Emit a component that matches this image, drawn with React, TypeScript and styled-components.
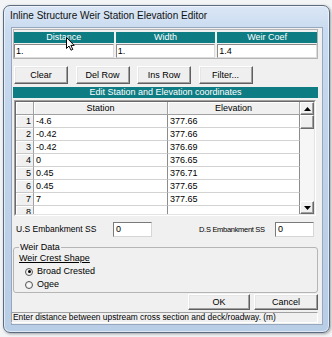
import React from 'react';
import styled, { createGlobalStyle } from 'styled-components';

const rows = [
    { station: '-4.6', elevation: '377.66' },
    { station: '-0.42', elevation: '377.66' },
    { station: '-0.42', elevation: '376.69' },
    { station: '0', elevation: '376.65' },
    { station: '0.45', elevation: '376.71' },
    { station: '0.45', elevation: '377.65' },
    { station: '7', elevation: '377.65' },
    { station: '', elevation: '' },
];

const App = () => {
    return (
        <Page>
            <GlobalStyle />
            <Window>
                <TitleBar>Inline Structure Weir Station Elevation Editor</TitleBar>
                <Client>
                    <TopTable>
                        <HeadCell>
                            Distance
                            <Cursor width="9" height="14" viewBox="0 0 9 14">
                                <path
                                    d="M0.5 0.5 L0.5 11.5 L3 9 L5 13.2 L6.8 12.4 L4.9 8.4 L8.2 8.4 Z"
                                    fill="#fff"
                                    stroke="#000"
                                    strokeWidth="1"
                                    strokeLinejoin="round"
                                />
                            </Cursor>
                        </HeadCell>
                        <HeadCell>Width</HeadCell>
                        <HeadCell>Weir Coef</HeadCell>
                        <ValueCell>1.</ValueCell>
                        <ValueCell>1.</ValueCell>
                        <ValueCell>1.4</ValueCell>
                    </TopTable>

                    <ButtonRow>
                        <Button>Clear</Button>
                        <Button>Del Row</Button>
                        <Button>Ins Row</Button>
                        <Button>Filter...</Button>
                    </ButtonRow>

                    <SectionBar>Edit Station and Elevation coordinates</SectionBar>

                    <GridBox>
                        <GridInner>
                            <GridTable>
                                <ColHead />
                                <ColHead>Station</ColHead>
                                <ColHead>Elevation</ColHead>
                                {rows.map((r, i) => (
                                    <React.Fragment key={i}>
                                        <RowNum>{i + 1}</RowNum>
                                        <DataCell>{r.station}</DataCell>
                                        <DataCell>{r.elevation}</DataCell>
                                    </React.Fragment>
                                ))}
                            </GridTable>
                            <ScrollBar>
                                <ScrollButton>
                                    <svg width="7" height="4" viewBox="0 0 7 4">
                                        <path d="M0 4 L3.5 0 L7 4 Z" fill="#000" />
                                    </svg>
                                </ScrollButton>
                                <Thumb />
                                <Track />
                                <ScrollButton>
                                    <svg width="7" height="4" viewBox="0 0 7 4">
                                        <path d="M0 0 L3.5 4 L7 0 Z" fill="#000" />
                                    </svg>
                                </ScrollButton>
                            </ScrollBar>
                        </GridInner>
                    </GridBox>

                    <EmbRow>
                        <FieldLabel $width={97}>U.S Embankment SS</FieldLabel>
                        <Input>0</Input>
                        <FieldLabel $width={76} $gap={47} $small>
                            D.S Embankment SS
                        </FieldLabel>
                        <Input>0</Input>
                    </EmbRow>

                    <Group>
                        <Legend>Weir Data</Legend>
                        <Underlined>Weir Crest Shape</Underlined>
                        <RadioList>
                            <RadioRow>
                                <Radio $checked />
                                Broad Crested
                            </RadioRow>
                            <RadioRow>
                                <Radio />
                                Ogee
                            </RadioRow>
                        </RadioList>
                    </Group>

                    <DialogButtons>
                        <Button $width={62} $height={16}>
                            OK
                        </Button>
                        <Button $width={64} $height={16}>
                            Cancel
                        </Button>
                    </DialogButtons>

                    <StatusBar>Enter distance between upstream cross section and deck/roadway. (m)</StatusBar>
                </Client>
            </Window>
        </Page>
    );
};

const GlobalStyle = createGlobalStyle`
    html, body {
        margin: 0;
        padding: 0;
    }
    body {
        width: 332px;
        height: 337px;
        overflow: hidden;
        background: #f3f4f6;
        font-family: "Liberation Sans", Arial, sans-serif;
        color: #000;
    }
`;

const Page = styled.div`
    padding: 5px 0 0 3px;
`;

const Window = styled.div`
    box-sizing: border-box;
    width: 327px;
    height: 328px;
    display: flex;
    flex-direction: column;
    border: 1px solid #5b6b80;
    border-radius: 7px;
    background: linear-gradient(180deg, #dbe7f5 0px, #c9dbf0 24px, #c0d4eb 120px, #b8cde6 100%);
    box-shadow: inset 0 0 0 1px rgba(255, 255, 255, 0.55), 1px 1px 3px rgba(0, 0, 0, 0.35);
`;

const TitleBar = styled.div`
    height: 21px;
    box-sizing: border-box;
    padding: 4px 0 0 6px;
    font-size: 10px;
    line-height: 12px;
    color: #111;
    white-space: nowrap;
`;

const Client = styled.div`
    flex: 1;
    margin: 0 6px 7px 7px;
    padding: 1px 4px 0 1px;
    display: flex;
    flex-direction: column;
    background: #f0f0f0;
    border: 1px solid #97a8bd;
    font-size: 9px;
    line-height: 11px;
`;

const TopTable = styled.div`
    box-sizing: border-box;
    height: 30px;
    display: grid;
    grid-template-columns: 1fr 1fr 1fr;
    grid-template-rows: 11px 14px;
    column-gap: 2px;
    row-gap: 1px;
    padding: 2px 0 0 0;
    border: 1px solid #b4b4b4;
`;

const HeadCell = styled.div`
    position: relative;
    background: #0e7c83;
    color: #fff;
    text-align: center;
    line-height: 11px;
`;

const Cursor = styled.svg`
    position: absolute;
    left: 52px;
    top: 5px;
`;

const ValueCell = styled.div`
    box-sizing: border-box;
    background: #fff;
    border: 1px solid;
    border-color: #8a8a8a #dcdcdc #dcdcdc #8a8a8a;
    padding: 1px 0 0 1px;
`;

const ButtonRow = styled.div`
    display: flex;
    gap: 7.5px;
    margin: 7px 0 0 1px;
`;

const Button = styled.div<{ $width?: number; $height?: number }>`
    box-sizing: border-box;
    width: ${(p) => p.$width ?? 54}px;
    height: ${(p) => p.$height ?? 18}px;
    display: flex;
    align-items: center;
    justify-content: center;
    background: #efefef;
    border: 1px solid;
    border-color: #ffffff #5f5f5f #5f5f5f #ffffff;
    box-shadow: inset -1px -1px 0 #a0a0a0, inset 1px 1px 0 #e6e6e6;
`;

const SectionBar = styled.div`
    height: 11px;
    margin-top: 3px;
    background: #0e7c83;
    color: #fff;
    text-align: center;
    line-height: 11px;
`;

const GridBox = styled.div`
    box-sizing: border-box;
    height: 116px;
    margin: 2px 2px 0 1px;
    border: 1px solid;
    border-color: #a0a0a0 #ffffff #ffffff #a0a0a0;
`;

const GridInner = styled.div`
    box-sizing: border-box;
    height: 100%;
    display: flex;
    overflow: hidden;
    border: 1px solid;
    border-color: #696969 #e3e3e3 #e3e3e3 #696969;
    background: #fff;
`;

const GridTable = styled.div`
    flex: 1;
    display: grid;
    grid-template-columns: 18px 134px 1fr;
    grid-auto-rows: 13px;
    align-content: start;
    overflow: hidden;
`;

const ColHead = styled.div`
    box-sizing: border-box;
    background: #f0f0f0;
    border-right: 1px solid #a0a0a0;
    border-bottom: 1px solid #a0a0a0;
    box-shadow: inset 1px 1px 0 #fff;
    text-align: center;
    line-height: 12px;
`;

const RowNum = styled.div`
    box-sizing: border-box;
    background: #f0f0f0;
    border-right: 1px solid #a0a0a0;
    border-bottom: 1px solid #c8c8c8;
    box-shadow: inset 1px 1px 0 #fff;
    text-align: right;
    padding-right: 2px;
    line-height: 12px;
`;

const DataCell = styled.div`
    box-sizing: border-box;
    border-right: 1px solid #8c8c8c;
    border-bottom: 1px solid #d2d2d2;
    padding-left: 2px;
    line-height: 12px;
`;

const ScrollBar = styled.div`
    width: 14px;
    display: flex;
    flex-direction: column;
    background: #f3f3f3;
`;

const ScrollButton = styled.div`
    box-sizing: border-box;
    height: 13px;
    display: flex;
    align-items: center;
    justify-content: center;
    background: #f0f0f0;
    border: 1px solid;
    border-color: #ffffff #6a6a6a #6a6a6a #ffffff;
    box-shadow: inset -1px -1px 0 #a0a0a0;
`;

const Thumb = styled.div`
    box-sizing: border-box;
    height: 14px;
    background: #f0f0f0;
    border: 1px solid;
    border-color: #ffffff #6a6a6a #6a6a6a #ffffff;
    box-shadow: inset -1px -1px 0 #a0a0a0;
`;

const Track = styled.div`
    flex: 1;
    background: #f6f6f6;
`;

const EmbRow = styled.div`
    display: flex;
    align-items: center;
    height: 15px;
    margin: 6px 0 0 3px;
`;

const FieldLabel = styled.div<{ $width: number; $gap?: number; $small?: boolean }>`
    width: ${(p) => p.$width}px;
    margin-left: ${(p) => p.$gap ?? 0}px;
    font-size: ${(p) => (p.$small ? '7.5px' : '8.5px')};
    letter-spacing: ${(p) => (p.$small ? '-0.3px' : '0')};
    white-space: nowrap;
`;

const Input = styled.div`
    box-sizing: border-box;
    width: 39px;
    height: 15px;
    background: #fff;
    border: 1px solid;
    border-color: #7a7a7a #d6d6d6 #d6d6d6 #7a7a7a;
    padding: 1px 0 0 2px;
    line-height: 11px;
`;

const Group = styled.fieldset`
    box-sizing: border-box;
    height: 51px;
    margin: 5px 0 0 0;
    padding: 0 5px 1px 5px;
    border: 1px solid #b5b5b5;
    border-radius: 3px;
    min-width: 0;
`;

const Legend = styled.legend`
    padding: 0 1px;
    font-size: 9px;
    line-height: 10px;
`;

const Underlined = styled.div`
    text-decoration: underline;
    line-height: 12px;
`;

const RadioList = styled.div`
    display: flex;
    flex-direction: column;
    margin-top: 1px;
`;

const RadioRow = styled.div`
    display: flex;
    align-items: center;
    height: 13px;
    gap: 4px;
    padding-left: 6px;
`;

const Radio = styled.span<{ $checked?: boolean }>`
    box-sizing: border-box;
    width: 8px;
    height: 8px;
    border-radius: 50%;
    border: 1px solid #555;
    background: radial-gradient(circle, #fff 0%, #e4e4e4 100%);
    display: flex;
    align-items: center;
    justify-content: center;
    &::after {
        content: '';
        width: 3px;
        height: 3px;
        border-radius: 50%;
        background: ${(p) => (p.$checked ? '#000' : 'transparent')};
    }
`;

const DialogButtons = styled.div`
    display: flex;
    justify-content: flex-end;
    gap: 4px;
    margin-top: 1px;
`;

const StatusBar = styled.div`
    box-sizing: border-box;
    height: 11px;
    margin: 2px 0 0 -2px;
    padding-left: 1px;
    border: 1px solid;
    border-color: #a0a0a0 #ffffff #ffffff #a0a0a0;
    font-size: 8.4px;
    line-height: 9px;
    white-space: nowrap;
    overflow: hidden;
`;

export default App;
